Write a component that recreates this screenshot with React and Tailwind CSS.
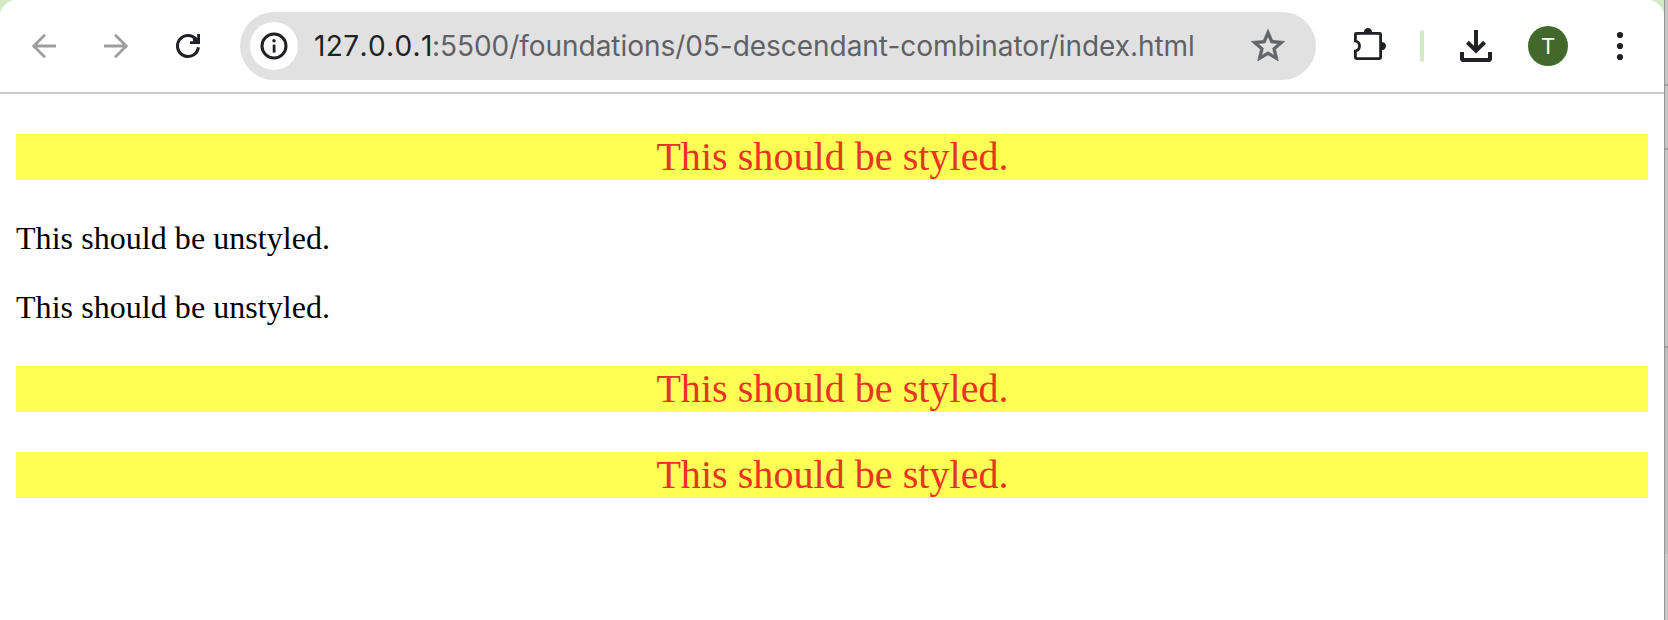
const INK = "#1f2125";

function Backdrop() {
  return (
    <div className="flex h-full w-1 flex-col overflow-hidden border-l border-[#969696] bg-[#c3c3c3]">
      <div className="h-[84px] shrink-0 bg-[#c6c6c6]" />
      <div className="h-0.5 shrink-0 bg-[#9e9e9e]" />
      <div className="h-[62px] shrink-0 bg-[#c6c6c6]" />
      <div className="h-0.5 shrink-0 bg-[#9e9e9e]" />
      <div className="h-[196px] shrink-0 bg-[#c6c6c6]" />
      <div className="h-0.5 shrink-0 bg-[#9e9e9e]" />
      <div className="h-[206px] shrink-0 bg-[#bdbdbd]" />
      <div className="grow bg-[#c9c9c9]" />
    </div>
  );
}

function Toolbar() {
  return (
    <header className="flex h-[94px] shrink-0 items-center border-b-2 border-[#cbcbcb] font-['Inter','Liberation_Sans',sans-serif]">
      <button className="ml-6 size-10" aria-label="Back">
        <svg viewBox="0 0 40 40" fill="none" stroke="#9f9f9f" strokeWidth="2.8">
          <path d="M32 20H10M21 8.8 9.8 20 21 31.2" />
        </svg>
      </button>
      <button className="ml-8 size-10" aria-label="Forward">
        <svg viewBox="0 0 40 40" fill="none" stroke="#9f9f9f" strokeWidth="2.8">
          <path d="M8 20H30M19 8.8 30.2 20 19 31.2" />
        </svg>
      </button>
      <button className="ml-8 size-10" aria-label="Reload">
        <svg viewBox="0 0 40 40" fill="none" stroke={INK} strokeWidth="3">
          <path d="M30.4 21.2A10.5 10.5 0 1 1 28 13.2" />
          <path d="M29.2 8H32V18H22V15.2H25.4L24.6 12.4L27 10.6L29.2 12Z" fill={INK} stroke="none" />
        </svg>
      </button>
      <div className="ml-8 flex h-[68px] w-[1076px] items-center rounded-full bg-[#e1e1e1] pl-2.5">
        <span className="flex size-12 items-center justify-center rounded-full bg-white">
          <svg className="size-7" viewBox="0 0 28 28" fill={INK}>
            <circle cx="14" cy="14" r="12" fill="none" stroke={INK} strokeWidth="3" />
            <rect x="12.7" y="12.6" width="2.8" height="8" />
            <circle cx="14" cy="8.8" r="1.7" />
          </svg>
        </span>
        <span className="ml-4 flex w-[920px] whitespace-nowrap text-[28px] leading-[34px] text-[#5f6166]">
          <span className="w-[118px] tracking-[0.4px] text-[#1f2125] [font-kerning:none]">127.0.0.1</span>
          <span className="tracking-[-0.04px]">:5500/foundations/05-descendant-combinator/index.html</span>
        </span>
        <svg className="ml-3.5 size-10 shrink-0" viewBox="0 0 24 24" fill="#616367" stroke="#616367" strokeWidth="0.4">
          <path d="m22 9.24-7.19-.62L12 2 9.19 8.63 2 9.24l5.46 4.73L5.82 21 12 17.27 18.18 21l-1.63-7.03L22 9.24zM12 15.4l-3.76 2.27 1-4.28-3.32-2.88 4.38-.38L12 6.1l1.71 4.04 4.38.38-3.32 2.88 1 4.28L12 15.4z" />
        </svg>
      </div>
      <button className="ml-8 size-10" aria-label="Extensions">
        <svg viewBox="0 0 40 40" fill="none" stroke={INK} strokeWidth="2.8">
          <path d="M8.4 7.4Q7.4 7.4 7.4 8.4V15A5.1 5.1 0 0 1 7.4 25V31.6Q7.4 32.6 8.4 32.6H31.6Q32.6 32.6 32.6 31.6V8.4Q32.6 7.4 31.6 7.4Z" />
          <path d="M15.9 6.4A4.1 4.4 0 0 1 24.1 6.4ZM33.6 15.9A4.4 4.1 0 0 1 33.6 24.1Z" fill={INK} stroke="none" />
        </svg>
      </button>
      <div className="ml-8 h-8 w-1 rounded-full bg-[#d3e8c5]" />
      <button className="ml-8 size-10" aria-label="Downloads">
        <svg viewBox="0 0 40 40" fill="none" stroke={INK} strokeWidth="4">
          <path d="M20 4V24M11.4 16.2 20 24.6 28.6 16.2M6 26V32.5Q6 34 7.5 34H32.5Q34 34 34 32.5V26" />
        </svg>
      </button>
      <div className="ml-8 flex size-10 items-center justify-center rounded-full bg-[#43682b] text-[22px] leading-none text-white">
        T
      </div>
      <button className="ml-8 size-10" aria-label="Menu">
        <svg viewBox="0 0 40 40" fill={INK}>
          <circle cx="20" cy="9" r="3.1" />
          <circle cx="20" cy="20" r="3.1" />
          <circle cx="20" cy="31" r="3.1" />
        </svg>
      </button>
    </header>
  );
}

function Styled() {
  return (
    <p className="h-[46px] bg-[#ffff55] pl-px text-center text-[40px] leading-[46px] tracking-[0.05px] text-[#eb3323]">
      This should be styled.
    </p>
  );
}

function Plain() {
  return (
    <p className="text-[32px] leading-[37px] tracking-[0.05px] text-black">
      This should be unstyled.
    </p>
  );
}

export default function App() {
  return (
    <div className="flex h-[620px] w-[1668px] overflow-hidden bg-[#d3e8c5]">
      <div className="flex w-[1664px] shrink-0 flex-col rounded-t-[16px] bg-white">
        <Toolbar />
        <main className="flex flex-col gap-10 px-4 pt-10 font-['Liberation_Serif',serif]">
          <Styled />
          <div className="flex flex-col gap-8">
            <Plain />
            <Plain />
          </div>
          <Styled />
          <Styled />
        </main>
      </div>
      <Backdrop />
    </div>
  );
}
